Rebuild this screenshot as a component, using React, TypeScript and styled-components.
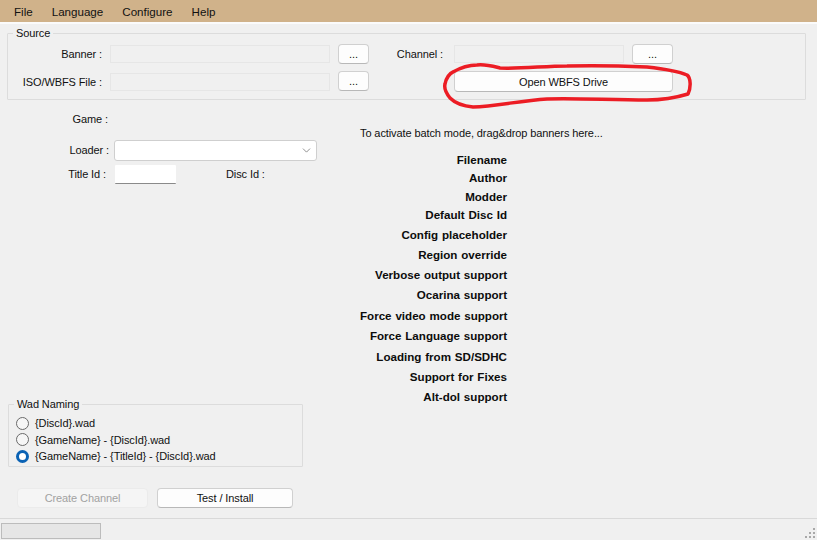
import styled, { createGlobalStyle } from "styled-components";
import { ChevronDown } from "lucide-react";

const GlobalStyle = createGlobalStyle`
  html, body {
    margin: 0;
    padding: 0;
    background: #f0f0f0;
  }
  * {
    box-sizing: border-box;
  }
  body {
    font-family: "Liberation Sans", Arial, sans-serif;
    font-size: 11px;
    letter-spacing: -0.1px;
    color: #111;
  }
`;

const Window = styled.div`
  position: relative;
  width: 817px;
  height: 540px;
  overflow: hidden;
  display: flex;
  flex-direction: column;
  background: #f0f0f0;
`;

const MenuBar = styled.nav`
  height: 24px;
  flex: none;
  display: flex;
  align-items: center;
  gap: 19px;
  padding: 2px 14px 0;
  font-size: 11.6px;
  letter-spacing: 0;
  background: #d0b28a;
  border-bottom: 2px solid #fbfbfb;
`;

const MenuItem = styled.span`
  line-height: 20px;
`;

const GroupBox = styled.fieldset`
  margin: 0;
  min-width: 0;
  padding: 0;
  border: 1px solid #dcdcdc;
  border-radius: 1px;
`;

const Legend = styled.legend`
  margin-left: 5px;
  padding: 0 3px;
  line-height: 14px;
`;

const NamingLegend = styled(Legend)`
  margin-left: -2px;
`;

const SourceBox = styled(GroupBox)`
  margin: 2px 11px 0 7px;
  height: 74px;
`;

const SourceGrid = styled.div`
  display: grid;
  grid-template-columns: 94px 220px 31px 69px 170px 41px;
  grid-template-rows: 20px 21px;
  column-gap: 8px;
  row-gap: 7px;
  padding-top: 4px;
`;

const FieldLabel = styled.label`
  display: flex;
  align-items: center;
  justify-content: flex-end;
  white-space: nowrap;
`;

const ChannelLabel = styled(FieldLabel)`
  padding-right: 3px;
`;

const ReadOnlyField = styled.div`
  height: 18px;
  align-self: center;
  background: #f0f0f0;
  border: 1px solid #f9f9f9;
  outline: 1px solid #e6e6e6;
  outline-offset: -1px;
`;

const Button = styled.button<{ $wide?: number }>`
  display: flex;
  align-items: center;
  justify-content: center;
  padding: 0;
  width: ${({ $wide }) => ($wide ? `${$wide}px` : "auto")};
  height: 20px;
  font: inherit;
  letter-spacing: inherit;
  color: #111;
  background: #fdfdfd;
  border: 1px solid #d0d0d0;
  border-bottom-color: #b8b8b8;
  border-radius: 4px;
`;

const DisabledButton = styled(Button)`
  color: #a2a2a2;
  background: #f5f5f5;
  border-color: #ebebeb;
`;

const DriveButton = styled(Button)`
  grid-column: 5 / span 2;
  height: 21px;
`;

const Main = styled.main`
  flex: 1;
  display: grid;
  grid-template-columns: 352px 1fr;
`;

const LeftColumn = styled.div`
  display: flex;
  flex-direction: column;
  padding-left: 8px;
`;

const GameGrid = styled.div`
  display: grid;
  grid-template-columns: 107px 61px 50px 91px;
  grid-template-rows: 27px 21px 19px;
  row-gap: 4px;
  margin-top: 9px;
`;

const GameLabel = styled(FieldLabel)<{ $end: number }>`
  padding: 0 ${({ $end }) => $end}px 2px 0;
`;

const GameRow = styled.div`
  grid-column: 1 / -1;
  width: 107px;
  height: 22px;
  display: flex;
  justify-content: flex-end;
`;

const DiscLabel = styled.span`
  align-self: center;
  margin-bottom: 2px;
  grid-column: 4;
  white-space: nowrap;
`;

const LoaderSelect = styled.div`
  grid-column: 2 / span 3;
  margin-left: -1px;
  height: 21px;
  display: flex;
  align-items: center;
  justify-content: flex-end;
  padding-right: 3px;
  color: #555;
  background: #fff;
  border: 1px solid #cfcfcf;
  border-radius: 3px;
`;

const TitleInput = styled.div`
  background: #fff;
  border-bottom: 1px solid #8a8a8a;
  border-radius: 1px;
`;

const NamingBox = styled(GroupBox)`
  margin-top: auto;
  width: 295px;
  height: 70px;
  padding: 4px 0 0 7px;
`;

const RadioRow = styled.label`
  display: flex;
  align-items: center;
  gap: 6px;
  height: 16.5px;
  white-space: nowrap;
`;

const RadioDot = styled.span<{ $checked?: boolean }>`
  flex: none;
  width: 13px;
  height: 13px;
  border-radius: 50%;
  background: ${({ $checked }) => ($checked ? "#fff" : "#f6f6f6")};
  border: ${({ $checked }) =>
    $checked ? "3.5px solid #0a62b4" : "1px solid #6a6a6a"};
`;

const ActionRow = styled.div`
  display: flex;
  gap: 9px;
  margin: 21px 0 10px 9px;
`;

const RightColumn = styled.div`
  padding: 25px 0 0 8px;
`;

const BatchHint = styled.p`
  margin: 0 0 10px;
  line-height: 16px;
`;

const InfoList = styled.ul`
  margin: 0;
  padding: 0;
  list-style: none;
  width: 147px;
`;

const InfoRow = styled.li<{ $height: number }>`
  height: ${({ $height }) => $height}px;
  line-height: ${({ $height }) => $height}px;
  text-align: right;
  white-space: nowrap;
  font-size: 11.6px;
  letter-spacing: 0;
  word-spacing: 0.6px;
  font-weight: 700;
  color: #0c0c0c;
`;

const StatusBar = styled.footer`
  height: 22px;
  flex: none;
  display: flex;
  align-items: center;
  justify-content: space-between;
  padding: 2px 0 0 1px;
  border-top: 1px solid #d9d9d9;
`;

const ProgressTrack = styled.div`
  width: 100px;
  height: 16px;
  background: #e6e6e6;
  border: 1px solid #bcbcbc;
`;

const Grip = styled.svg`
  align-self: flex-end;
  margin: 0 1px 1px 0;
`;

const Scribble = styled.svg`
  position: absolute;
  left: 440px;
  top: 60px;
  pointer-events: none;
`;

const infoRows: [string, number][] = [
  ["Filename", 18],
  ["Author", 18],
  ["Modder", 19],
  ["Default Disc Id", 18],
  ["Config placeholder", 21],
  ["Region override", 20],
  ["Verbose output support", 20],
  ["Ocarina support", 20],
  ["Force video mode support", 21],
  ["Force Language support", 20],
  ["Loading from SD/SDHC", 21],
  ["Support for Fixes", 20],
  ["Alt-dol support", 20],
];

const namingOptions = [
  "{DiscId}.wad",
  "{GameName} - {DiscId}.wad",
  "{GameName} - {TitleId} - {DiscId}.wad",
];

export default function App() {
  return (
    <Window>
      <GlobalStyle />
      <MenuBar>
        <MenuItem>File</MenuItem>
        <MenuItem>Language</MenuItem>
        <MenuItem>Configure</MenuItem>
        <MenuItem>Help</MenuItem>
      </MenuBar>

      <SourceBox>
        <Legend>Source</Legend>
        <SourceGrid>
          <FieldLabel>Banner :</FieldLabel>
          <ReadOnlyField />
          <Button>...</Button>
          <ChannelLabel>Channel :</ChannelLabel>
          <ReadOnlyField />
          <Button>...</Button>
          <FieldLabel>ISO/WBFS File :</FieldLabel>
          <ReadOnlyField />
          <Button>...</Button>
          <span />
          <DriveButton>Open WBFS Drive</DriveButton>
        </SourceGrid>
      </SourceBox>

      <Main>
        <LeftColumn>
          <GameGrid>
            <GameRow>
              <GameLabel $end={7}>Game :</GameLabel>
            </GameRow>
            <GameLabel $end={6}>Loader :</GameLabel>
            <LoaderSelect>
              <ChevronDown size={13} strokeWidth={1.2} />
            </LoaderSelect>
            <GameLabel $end={9}>Title Id :</GameLabel>
            <TitleInput />
            <DiscLabel>Disc Id :</DiscLabel>
          </GameGrid>

          <NamingBox>
            <NamingLegend>Wad Naming</NamingLegend>
            {namingOptions.map((option, i) => (
              <RadioRow key={option}>
                <RadioDot $checked={i === 2} />
                {option}
              </RadioRow>
            ))}
          </NamingBox>

          <ActionRow>
            <DisabledButton $wide={131} disabled>
              Create Channel
            </DisabledButton>
            <Button $wide={136}>Test / Install</Button>
          </ActionRow>
        </LeftColumn>

        <RightColumn>
          <BatchHint>To activate batch mode, drag&amp;drop banners here...</BatchHint>
          <InfoList>
            {infoRows.map(([label, height]) => (
              <InfoRow key={label} $height={height}>
                {label}
              </InfoRow>
            ))}
          </InfoList>
        </RightColumn>
      </Main>

      <StatusBar>
        <ProgressTrack />
        <Grip width="12" height="12" viewBox="0 0 12 12">
          <g fill="#a8a8a8">
            <rect x="9" y="1" width="2" height="2" />
            <rect x="5" y="5" width="2" height="2" />
            <rect x="9" y="5" width="2" height="2" />
            <rect x="1" y="9" width="2" height="2" />
            <rect x="5" y="9" width="2" height="2" />
            <rect x="9" y="9" width="2" height="2" />
          </g>
        </Grip>
      </StatusBar>

      <Scribble width="256" height="52" viewBox="440 60 256 52">
        <path
          d="M477 65 C485 64 492 66 500 68 C520 69 545 66 567 66 C600 65 625 66 647 67 C665 69 680 72 687 75 C691 78 691 88 688 94 C675 98 660 100 647 100 C610 100 575 98 547 99 C520 101 495 106 473 107 C462 106 454 102 450 98 C446 93 444 88 445 84 C446 78 450 73 453 72 C460 68 468 65 477 65 Z"
          fill="none"
          stroke="#ec1c24"
          strokeWidth="3.5"
          strokeLinejoin="round"
        />
      </Scribble>
    </Window>
  );
}
